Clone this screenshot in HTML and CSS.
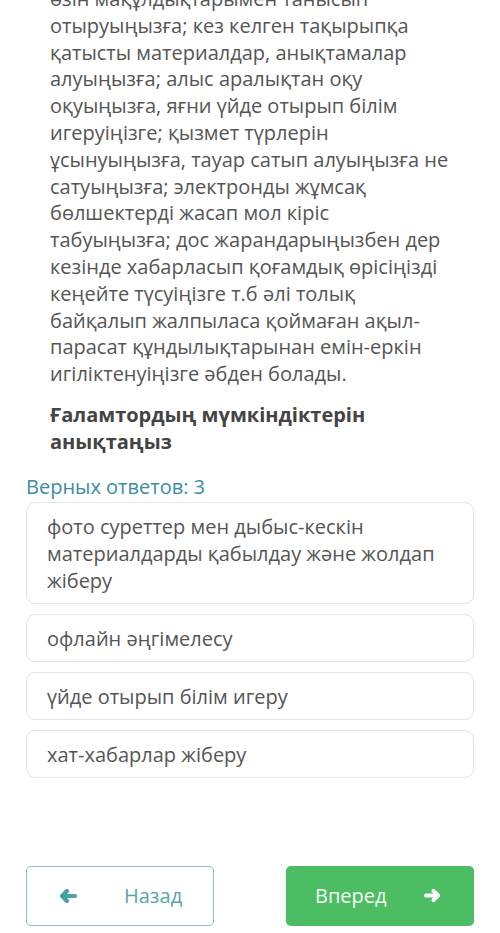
FILE: index.html
```html
<!DOCTYPE html>
<html>
<head>
  <title>Тест</title>
  <link rel="stylesheet" href="styles.css">
</head>
<body>
  <div class="page">
    <div class="question">
      <p class="question-text">өзін мақұлдықтарымен танысып<br>
        отыруыңызға; кез келген тақырыпқа<br>
        қатысты материалдар, анықтамалар<br>
        алуыңызға; алыс аралықтан оқу<br>
        оқуыңызға, яғни үйде отырып білім<br>
        игеруіңізге; қызмет түрлерін<br>
        ұсынуыңызға, тауар сатып алуыңызға не<br>
        сатуыңызға; электронды жұмсақ<br>
        бөлшектерді жасап мол кіріс<br>
        табуыңызға; дос жарандарыңызбен дер<br>
        кезінде хабарласып қоғамдық өрісіңізді<br>
        кеңейте түсуіңізге т.б әлі толық<br>
        байқалып жалпыласа қоймаған ақыл-<br>
        парасат құндылықтарынан емін-еркін<br>
        игіліктенуіңізге әбден болады.</p>
      <p class="question-title">Ғаламтордың мүмкіндіктерін анықтаңыз</p>
    </div>

    <div class="answers-count">Верных ответов: 3</div>

    <div class="options">
      <div class="option">фото суреттер мен дыбыс-кескін материалдарды қабылдау және жолдап жіберу</div>
      <div class="option">офлайн әңгімелесу</div>
      <div class="option">үйде отырып білім игеру</div>
      <div class="option">хат-хабарлар жіберу</div>
    </div>

    <div class="nav">
      <button class="nav-btn back">
        <svg class="arrow" viewBox="0 0 20 16" width="20" height="16">
          <path d="M17 8H5M9 3L4 8l5 5" fill="none" stroke="currentColor" stroke-width="4.2" stroke-linecap="round" stroke-linejoin="round"/>
        </svg>
        <span>Назад</span>
      </button>
      <button class="nav-btn next">
        <span>Вперед</span>
        <svg class="arrow" viewBox="0 0 20 16" width="19" height="15">
          <path d="M3 8h12M11 3l5 5-5 5" fill="none" stroke="currentColor" stroke-width="4.2" stroke-linecap="round" stroke-linejoin="round"/>
        </svg>
      </button>
    </div>
  </div>
</body>
</html>
```

FILE: styles.css
```css
body {
  margin: 0;
  background-color: #fff;
  font-family: "Open Sans", "Noto Sans", sans-serif;
  color: #555;
}

.page {
  width: 448px;
  padding: 0 26px;
  margin-top: -14px;
}

.question {
  padding-left: 24px;
  width: 424px;
}

.question-text {
  margin: 0;
  font-size: 20px;
  line-height: 26.8px;
}

.question-title {
  margin: 13px 0 0;
  font-size: 20px;
  line-height: 27px;
  font-weight: 700;
  color: #444;
}

.answers-count {
  margin-top: 19px;
  font-size: 20px;
  line-height: 26px;
  color: #3a8da3;
}

.options {
  display: flex;
  flex-direction: column;
  gap: 10px;
  margin-top: 2px;
}

.option {
  padding: 10px 20px 9px;
  border: 1px solid #e3e3e3;
  border-radius: 9px;
  font-size: 20px;
  line-height: 27px;
  color: #555;
}

.nav {
  display: flex;
  justify-content: space-between;
  margin-top: 88px;
}

.nav-btn {
  display: flex;
  align-items: center;
  width: 188px;
  height: 60px;
  border-radius: 5px;
  font-family: "Open Sans", "Noto Sans", sans-serif;
  font-size: 20px;
  box-sizing: border-box;
}

.nav-btn.back {
  padding-left: 31px;
  gap: 46px;
  background-color: #fff;
  border: 1.5px solid #8dbcc3;
  color: #5aa3aa;
}

.nav-btn.back .arrow {
  color: #47a3a8;
}

.nav-btn.next {
  padding-left: 29px;
  gap: 36px;
  background-color: #4dbd63;
  border: none;
  color: #f4fbf5;
}

.nav-btn.next .arrow {
  color: #fff;
}
```
